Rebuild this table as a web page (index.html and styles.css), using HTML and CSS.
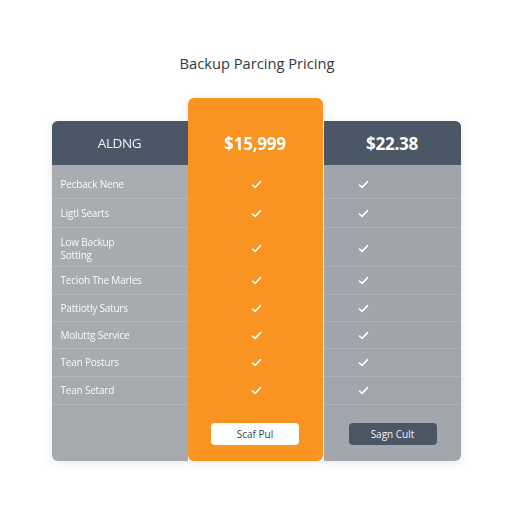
FILE: index.html
```html
<!DOCTYPE html>
<html>
<head>
<meta charset="utf-8">
<link rel="stylesheet" href="styles.css">
</head>
<body>
<div class="page">
  <h1 class="title">Backup Parcing Pricing</h1>
  <div class="table">
    <div class="col col-left">
      <div class="head"><span class="head-label">ALDNG</span></div>
      <div class="row r1"><span>Pecback Nene</span></div>
      <div class="row r2"><span>Ligtl Searts</span></div>
      <div class="row r3"><span>Low Backup<br>Sotting</span></div>
      <div class="row r4"><span>Tecioh The Marles</span></div>
      <div class="row r5"><span>Pattiotly Saturs</span></div>
      <div class="row r6"><span>Moluttg Service</span></div>
      <div class="row r7"><span>Tean Posturs</span></div>
      <div class="row r8"><span>Tean Setard</span></div>
      <div class="foot"></div>
    </div>
    <div class="col col-mid">
      <div class="head"><span class="price">$15,999</span></div>
      <div class="row r1"><svg class="chk" viewBox="0 0 12 10"><polyline points="1.5,5.5 4.5,8.2 10.5,1.8"/></svg></div>
      <div class="row r2"><svg class="chk" viewBox="0 0 12 10"><polyline points="1.5,5.5 4.5,8.2 10.5,1.8"/></svg></div>
      <div class="row r3"><svg class="chk" viewBox="0 0 12 10"><polyline points="1.5,5.5 4.5,8.2 10.5,1.8"/></svg></div>
      <div class="row r4"><svg class="chk" viewBox="0 0 12 10"><polyline points="1.5,5.5 4.5,8.2 10.5,1.8"/></svg></div>
      <div class="row r5"><svg class="chk" viewBox="0 0 12 10"><polyline points="1.5,5.5 4.5,8.2 10.5,1.8"/></svg></div>
      <div class="row r6"><svg class="chk" viewBox="0 0 12 10"><polyline points="1.5,5.5 4.5,8.2 10.5,1.8"/></svg></div>
      <div class="row r7"><svg class="chk" viewBox="0 0 12 10"><polyline points="1.5,5.5 4.5,8.2 10.5,1.8"/></svg></div>
      <div class="row r8"><svg class="chk" viewBox="0 0 12 10"><polyline points="1.5,5.5 4.5,8.2 10.5,1.8"/></svg></div>
      <div class="foot"><button class="btn btn-light">Scaf Pul</button></div>
    </div>
    <div class="col col-right">
      <div class="head"><span class="price">$22.38</span></div>
      <div class="row r1"><svg class="chk" viewBox="0 0 12 10"><polyline points="1.5,5.5 4.5,8.2 10.5,1.8"/></svg></div>
      <div class="row r2"><svg class="chk" viewBox="0 0 12 10"><polyline points="1.5,5.5 4.5,8.2 10.5,1.8"/></svg></div>
      <div class="row r3"><svg class="chk" viewBox="0 0 12 10"><polyline points="1.5,5.5 4.5,8.2 10.5,1.8"/></svg></div>
      <div class="row r4"><svg class="chk" viewBox="0 0 12 10"><polyline points="1.5,5.5 4.5,8.2 10.5,1.8"/></svg></div>
      <div class="row r5"><svg class="chk" viewBox="0 0 12 10"><polyline points="1.5,5.5 4.5,8.2 10.5,1.8"/></svg></div>
      <div class="row r6"><svg class="chk" viewBox="0 0 12 10"><polyline points="1.5,5.5 4.5,8.2 10.5,1.8"/></svg></div>
      <div class="row r7"><svg class="chk" viewBox="0 0 12 10"><polyline points="1.5,5.5 4.5,8.2 10.5,1.8"/></svg></div>
      <div class="row r8"><svg class="chk" viewBox="0 0 12 10"><polyline points="1.5,5.5 4.5,8.2 10.5,1.8"/></svg></div>
      <div class="foot"><button class="btn btn-dark">Sagn Cult</button></div>
    </div>
  </div>
</div>
</body>
</html>
```
FILE: styles.css
```css
* { box-sizing: border-box; }
html, body { margin: 0; padding: 0; background: #ffffff; }
body { font-family: "Open Sans", "Noto Sans", "Liberation Sans", sans-serif; width: 512px; height: 512px; overflow: hidden; }

.page { display: flex; flex-direction: column; align-items: center; padding-top: 53px; }

.title { margin: 0 0 26px 0; font-size: 14.7px; font-weight: 400; color: #343a40; line-height: 20px; height: 19px; padding-left: 2px; }

.table { display: flex; align-items: flex-start; filter: drop-shadow(0 2px 5px rgba(60, 70, 80, 0.12)); }

.col { display: flex; flex-direction: column; }

.col-left { width: 136px; margin-top: 23px; background: linear-gradient(180deg, #a9adb2 0%, #a6aaaf 100%); border-radius: 6px 0 0 6px; overflow: hidden; }
.col-mid { width: 135px; background: #f8941f; border-radius: 6px; overflow: hidden; position: relative; z-index: 1; }
.col-right { width: 137px; margin-top: 23px; margin-left: 1px; background: linear-gradient(180deg, #9fa4ab 0%, #a2a7ad 100%); border-radius: 0 6px 6px 0; overflow: hidden; }

.head { height: 44px; display: flex; align-items: center; justify-content: center; }
.col-left .head, .col-right .head { background: #4b5666; }
.col-mid .head { height: 67px; padding-top: 23px; }

.head-label { font-size: 13.5px; color: #eef1f4; letter-spacing: -0.4px; }
.price { font-size: 17px; font-weight: 700; color: #ffffff; letter-spacing: -0.2px; }

.row { display: flex; align-items: center; border-bottom: 1px solid rgba(255, 255, 255, 0.13); }
.col-mid .row { border-bottom-color: rgba(255, 255, 255, 0.04); justify-content: center; padding-left: 2px; }
.col-right .row { padding-left: 34px; }
.col-left .row { padding-left: 9px; font-size: 10px; color: #f7f8f9; line-height: 13px; letter-spacing: -0.2px; }

.r1 { height: 34px; padding-top: 6px; }
.r2 { height: 29px; }
.r3 { height: 39px; padding-top: 3px; }
.r4 { height: 28px; }
.r5 { height: 27px; }
.r6 { height: 27px; }
.r7 { height: 28px; }
.r8 { height: 28px; }

.chk { width: 11px; height: 9px; fill: none; stroke: #ffffff; stroke-width: 1.7; stroke-linecap: round; stroke-linejoin: round; }

.foot { height: 56px; display: flex; justify-content: center; padding-top: 18px; }
.col-right .foot { padding-left: 1px; }

.btn { width: 88px; height: 22px; border: none; border-radius: 4px; font-family: "Open Sans", "Noto Sans", sans-serif; font-size: 10px; padding: 0; cursor: pointer; }
.btn-light { background: #ffffff; color: #3b3f46; }
.btn-dark { background: #4b5666; color: #f2f4f6; }
```
